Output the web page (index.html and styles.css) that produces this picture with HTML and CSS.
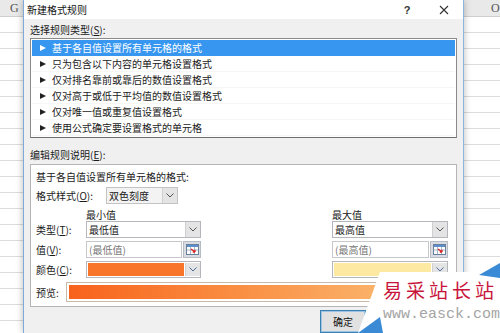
FILE: index.html
```html
<!DOCTYPE html>
<html lang="zh-CN">
<head>
    <meta charset="UTF-8">
    <meta name="viewport" content="width=device-width, initial-scale=1.0">
    <title>新建格式规则</title>
    <link rel="stylesheet" href="styles.css">
</head>
<body>
<div class="screen">
    <!-- Sheet behind the dialog, left side -->
    <div class="sheet sheet-left">
        <div class="col-head">G</div>
        <div class="rows"></div>
    </div>

    <div class="dialog">
        <div class="titlebar">
            <span class="title">新建格式规则</span>
            <span class="help">?</span>
            <span class="close">
                <svg width="10" height="10" viewBox="0 0 10 10"><path d="M1 1 L9 9 M9 1 L1 9" stroke="#333" stroke-width="1.1" fill="none"/></svg>
            </span>
        </div>

        <div class="dialog-body">
            <div class="label">选择规则类型(<u>S</u>):</div>
            <ul class="rule-list">
                <li class="selected"><i class="arrow"></i>基于各自值设置所有单元格的格式</li>
                <li><i class="arrow"></i>只为包含以下内容的单元格设置格式</li>
                <li><i class="arrow"></i>仅对排名靠前或靠后的数值设置格式</li>
                <li><i class="arrow"></i>仅对高于或低于平均值的数值设置格式</li>
                <li><i class="arrow"></i>仅对唯一值或重复值设置格式</li>
                <li><i class="arrow"></i>使用公式确定要设置格式的单元格</li>
            </ul>

            <div class="label label-edit">编辑规则说明(<u>E</u>):</div>
            <div class="panel">
                <div class="desc">基于各自值设置所有单元格的格式:</div>

                <div class="style-row">
                    <span class="style-label">格式样式(<u>O</u>):</span>
                    <div class="combo combo-style">
                        <span class="combo-text">双色刻度</span>
                        <span class="drop"><svg width="8" height="5" viewBox="0 0 8 5"><path d="M0.5 0.5 L4 4 L7.5 0.5" stroke="#555" fill="none"/></svg></span>
                    </div>
                </div>

                <div class="scale-grid">
                    <span class="head col-min">最小值</span>
                    <span class="head col-max">最大值</span>

                    <span class="row-label r-type">类型(<u>T</u>):</span>
                    <div class="combo r-type col-min">
                        <span class="combo-text">最低值</span>
                        <span class="drop"><svg width="8" height="5" viewBox="0 0 8 5"><path d="M0.5 0.5 L4 4 L7.5 0.5" stroke="#555" fill="none"/></svg></span>
                    </div>
                    <div class="combo r-type col-max">
                        <span class="combo-text">最高值</span>
                        <span class="drop"><svg width="8" height="5" viewBox="0 0 8 5"><path d="M0.5 0.5 L4 4 L7.5 0.5" stroke="#555" fill="none"/></svg></span>
                    </div>

                    <span class="row-label r-value">值(<u>V</u>):</span>
                    <div class="value-cell r-value col-min">
                        <span class="input">(最低值)</span>
                        <span class="ref-btn">
                            <svg width="13" height="11" viewBox="0 0 13 11">
                                <rect x="0.5" y="0.5" width="12" height="10" fill="#fff" stroke="#6a7f99"/>
                                <rect x="1" y="1" width="11" height="2" fill="#5b8fd0"/>
                                <path d="M1 6 H12 M4.5 3 V10 M8.5 3 V10" stroke="#a9b6c6"/>
                                <path d="M5 5 L9 8 M9 8 L9 5.8 M9 8 L6.8 8" stroke="#d22" stroke-width="1.3" fill="none"/>
                            </svg>
                        </span>
                    </div>
                    <div class="value-cell r-value col-max">
                        <span class="input">(最高值)</span>
                        <span class="ref-btn">
                            <svg width="13" height="11" viewBox="0 0 13 11">
                                <rect x="0.5" y="0.5" width="12" height="10" fill="#fff" stroke="#6a7f99"/>
                                <rect x="1" y="1" width="11" height="2" fill="#5b8fd0"/>
                                <path d="M1 6 H12 M4.5 3 V10 M8.5 3 V10" stroke="#a9b6c6"/>
                                <path d="M5 5 L9 8 M9 8 L9 5.8 M9 8 L6.8 8" stroke="#d22" stroke-width="1.3" fill="none"/>
                            </svg>
                        </span>
                    </div>

                    <span class="row-label r-color">颜色(<u>C</u>):</span>
                    <div class="combo combo-color r-color col-min">
                        <span class="swatch swatch-min"></span>
                        <span class="drop"><svg width="8" height="5" viewBox="0 0 8 5"><path d="M0.5 0.5 L4 4 L7.5 0.5" stroke="#4a6a9a" fill="none"/></svg></span>
                    </div>
                    <div class="combo combo-color r-color col-max">
                        <span class="swatch swatch-max"></span>
                        <span class="drop"><svg width="8" height="5" viewBox="0 0 8 5"><path d="M0.5 0.5 L4 4 L7.5 0.5" stroke="#4a6a9a" fill="none"/></svg></span>
                    </div>
                </div>

                <div class="preview-row">
                    <span class="preview-label">预览:</span>
                    <div class="preview"><div class="preview-fill"></div></div>
                </div>
            </div>

            <div class="buttons">
                <button class="btn btn-default">确定</button>
            </div>
        </div>
    </div>

    <!-- Sheet behind the dialog, right side -->
    <div class="sheet sheet-right">
        <div class="col-head">O</div>
        <div class="rows"></div>
    </div>

    <!-- Site watermark in the corner -->
    <div class="watermark">
        <svg class="wm-shape" width="145" height="71" viewBox="0 0 145 71">
            <polygon points="25,10 125,10 145,2 145,71 3,71" fill="#fff"/>
            <polygon points="3,71 25,55 28,71" fill="#3b8ad6"/>
            <polygon points="124,13 145,1 145,16" fill="#3b8ad6"/>
        </svg>
        <div class="wm-name">易采站长站</div>
        <div class="wm-url">www.easck.com</div>
    </div>
</div>
</body>
</html>
```

FILE: styles.css
```css
/* General Styles */
body {
    margin: 0;
    padding: 0;
    background-color: #fff;
    font-family: "Noto Sans CJK SC", "Noto Sans", sans-serif;
    font-size: 10px;
    color: #1a1a1a;
}

u {
    text-decoration: underline;
}

.screen {
    position: relative;
    display: flex;
    width: 500px;
    height: 333px;
    overflow: hidden;
}

/* Spreadsheet strips */
.sheet {
    display: flex;
    flex-direction: column;
}

.sheet-left {
    width: 23px;
}

.sheet-right {
    flex: 1;
}

.col-head {
    height: 16px;
    line-height: 16px;
    background-color: #e9e9e9;
    border-bottom: 1px solid #cfcfcf;
    font-family: "Liberation Serif", serif;
    font-size: 12px;
    color: #555;
}

.sheet-left .col-head {
    padding-left: 10px;
}

.sheet-right .col-head {
    padding-left: 27px;
}

.rows {
    flex: 1;
    background: repeating-linear-gradient(to bottom, #fff 0, #fff 15px, #dcdcdc 15px, #dcdcdc 16px);
}

/* Dialog */
.dialog {
    width: 439px;
    display: flex;
    flex-direction: column;
    background-color: #f0f0f0;
    border-left: 1px solid #7fa9d8;
    border-right: 1px solid #8cb4e0;
    box-shadow: 0 0 7px rgba(0, 0, 0, 0.28);
    z-index: 2;
}

.titlebar {
    height: 22px;
    display: flex;
    align-items: center;
    background-color: #fff;
    padding-left: 3px;
}

.title {
    flex: 1;
    font-size: 10px;
    color: #111;
}

.help {
    width: 20px;
    text-align: center;
    font-family: "Liberation Sans", sans-serif;
    font-weight: bold;
    font-size: 11px;
    color: #333;
}

.close {
    width: 26px;
    margin-left: 14px;
    margin-right: 6px;
    display: flex;
    justify-content: center;
}

.dialog-body {
    flex: 1;
    padding: 0 6px;
}

.label {
    margin-top: 5px;
    line-height: 12px;
}

.label-edit {
    margin-top: 11px;
}

.rule-list {
    list-style: none;
    margin: 2px 0 0;
    padding: 1px;
    height: 96px;
    background-color: #fff;
    border: 1px solid #8a8a8a;
    border-bottom-color: #6f6f6f;
}

.rule-list li {
    height: 16px;
    line-height: 16px;
    padding-left: 8px;
    display: flex;
    align-items: center;
    border-bottom: 1px solid #f6f6f6;
    box-sizing: border-box;
}

.rule-list li.selected {
    background-color: #3797f0;
    color: #fff;
    border-bottom-color: #3797f0;
}

.arrow {
    width: 0;
    height: 0;
    border-top: 3px solid transparent;
    border-bottom: 3px solid transparent;
    border-left: 6px solid #222;
    margin-right: 6px;
}

.selected .arrow {
    border-left-color: #fff;
}

/* Rule description panel */
.panel {
    margin-top: 3px;
    padding: 6px 8px 4px 5px;
    background-color: #fff;
    border: 1px solid #b5b5b5;
}

.desc {
    line-height: 12px;
}

.style-row {
    margin-top: 4px;
    display: flex;
    align-items: center;
}

.style-label {
    width: 70px;
}

.combo {
    height: 17px;
    box-sizing: border-box;
    display: flex;
    align-items: stretch;
    background-color: #fff;
    border: 1px solid #b4b6bb;
}

.combo-style {
    width: 72px;
    background-color: #f3f3f3;
    border-color: #c3c3c3;
}

.combo-text {
    flex: 1;
    line-height: 15px;
    padding-left: 2px;
}

.drop {
    width: 14px;
    display: flex;
    align-items: center;
    justify-content: center;
    background-color: #e4e4e4;
    border-left: 1px solid #d0d0d0;
}

.scale-grid {
    margin-top: 2px;
    display: grid;
    grid-template-columns: 50px 115px 1fr 116px;
    grid-template-rows: 12px 17px 17px 17px;
    row-gap: 3px;
}

.head {
    grid-row: 1;
    align-self: end;
    line-height: 12px;
    margin-bottom: -3px;
}

.col-min {
    grid-column: 2;
}

.col-max {
    grid-column: 4;
}

.row-label {
    grid-column: 1;
    line-height: 17px;
}

.r-type {
    grid-row: 2;
}

.r-value {
    grid-row: 3;
}

.r-color {
    grid-row: 4;
}

.value-cell {
    display: flex;
}

.input {
    flex: 1;
    line-height: 15px;
    padding-left: 2px;
    color: #777;
    border: 1px solid #c6c8cc;
}

.ref-btn {
    width: 16px;
    margin-left: 1px;
    display: flex;
    align-items: center;
    justify-content: center;
    background-color: #d9dde3;
    border: 1px solid #b7bcc4;
}

.combo-color {
    padding: 1px 0 1px 1px;
}

.swatch {
    flex: 1;
    margin-right: 1px;
}

.swatch-min {
    background-color: #f8752a;
}

.swatch-max {
    background-color: #fde9a2;
}

.preview-row {
    margin-top: 4px;
    display: flex;
    align-items: center;
}

.preview-label {
    width: 30px;
}

.preview {
    flex: 1;
    height: 20px;
    box-sizing: border-box;
    padding: 2px;
    border: 1px solid #c9b9a9;
}

.preview-fill {
    height: 100%;
    background: linear-gradient(to right, #f8621c 0%, #f98a3e 40%, #fbb46c 85%, #fcd08a 100%);
}

/* Buttons */
.buttons {
    margin-top: 3px;
    display: flex;
    justify-content: flex-end;
    padding-right: 91px;
}

.btn {
    width: 46px;
    height: 23px;
    padding: 0;
    font-family: "Noto Sans CJK SC", sans-serif;
    font-size: 10px;
    color: #111;
    background-color: #e1e1e1;
    border: 1px solid #adadad;
}

.btn-default {
    border: 1px solid #3c7fb1;
    box-shadow: inset 0 0 0 1px #9ec4e4;
}

/* Watermark */
.watermark {
    position: absolute;
    left: 355px;
    top: 262px;
    width: 145px;
    height: 71px;
    z-index: 5;
}

.wm-shape {
    position: absolute;
    left: 0;
    top: 0;
}

.wm-name {
    position: relative;
    margin: 16px 0 0 28px;
    font-size: 19px;
    line-height: 24px;
    letter-spacing: 4px;
    color: #c8143a;
    white-space: nowrap;
}

.wm-url {
    position: relative;
    margin: 5px 0 0 28px;
    font-family: "Liberation Mono", monospace;
    font-size: 15px;
    line-height: 15px;
    color: #a5a5a5;
    white-space: nowrap;
}
```
